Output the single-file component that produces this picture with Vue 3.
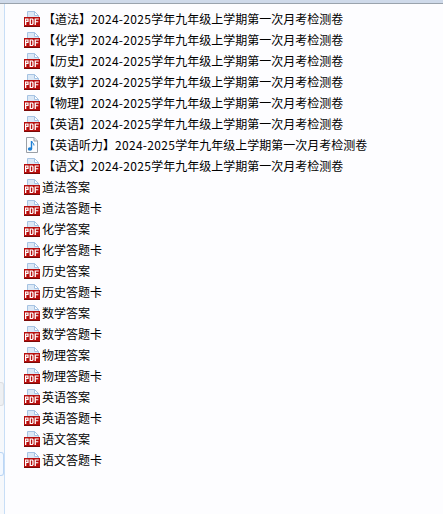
<script setup>
const title = '学年九年级上学期第一次月考检测卷'
const years = '2024-2025'

const papers = ['道法', '化学', '历史', '数学', '物理', '英语'].map((s) => ({
  name: `【${s}】`,
  years,
  title,
  type: 'pdf'
}))
papers.push({ name: '【英语听力】', years, title, type: 'audio' })
papers.push({ name: '【语文】', years, title, type: 'pdf' })

const answers = []
for (const s of ['道法', '化学', '历史', '数学', '物理', '英语', '语文']) {
  answers.push({ name: `${s}答案`, type: 'pdf' })
  answers.push({ name: `${s}答题卡`, type: 'pdf' })
}

const files = [...papers, ...answers]
</script>

<template>
  <div class="window">
    <div class="topbar"></div>
    <div class="body">
      <div class="side">
        <div class="side-tab first"></div>
        <div class="side-tab second"></div>
      </div>
      <main class="pane">
        <ul class="list">
          <li v-for="f in files" :key="f.name" class="row" :class="{ wide: f.years }">
            <svg v-if="f.type === 'pdf'" class="icon" width="16" height="16" viewBox="0 0 16 16">
              <path d="M3.5 .5H10.5L14.5 4.5V15.5H3.5Z" fill="#dbe8f6" stroke="#a6c3e3" />
              <path d="M10.5 .5V4.5H14.5Z" fill="#fff" stroke="#a6c3e3" />
              <rect x="0" y="6" width="16" height="10" fill="#b80f0e" />
              <rect x="0" y="15" width="16" height="1" fill="#7a0a08" />
              <path d="M1 7.5h3.6v3.6H2.3V14H1ZM2.3 8.6v1.4h1V8.6Z" fill="#fff" fill-rule="evenodd" />
              <path d="M5.6 7.5h3l1 1v4.5l-1 1h-3ZM6.9 8.6v4.3h1l.4-.4V9l-.4-.4Z" fill="#fff" fill-rule="evenodd" />
              <path d="M10.6 7.5h4.2v1.1h-2.9v1.6h2.4v1.1h-2.4V14h-1.3Z" fill="#fff" />
            </svg>
            <svg v-else class="icon" width="16" height="16" viewBox="0 0 16 16">
              <path d="M2.5 .5H10L13.5 4V15.5H2.5Z" fill="#fbfcfe" stroke="#9a9fa6" />
              <path d="M10 .5V4H13.5" fill="#e6e9ee" stroke="#9a9fa6" />
              <path d="M7.5 4V12" stroke="#1d7fd4" stroke-width="1.4" fill="none" />
              <path d="M7.5 4C8 6 10 6 10 8.5" stroke="#1d7fd4" stroke-width="1" fill="none" />
              <ellipse cx="6" cy="12" rx="2.2" ry="1.8" fill="#1d7fd4" />
            </svg>
            <span class="name">{{ f.name }}<span v-if="f.years" class="years">{{ f.years }}</span>{{ f.title }}</span>
          </li>
        </ul>
      </main>
    </div>
  </div>
</template>

<style scoped>
.window {
  width: 443px;
  height: 514px;
  display: flex;
  flex-direction: column;
  background: #fdfdff;
  overflow: hidden;
  font-family: "Noto Sans CJK SC", "Liberation Sans", sans-serif;
}
.topbar {
  height: 3px;
  flex: none;
  background: #cfdaea;
  border-bottom: 1px solid #9aa3ad;
}
.body {
  flex: 1;
  display: flex;
  min-height: 0;
}
.side {
  width: 4px;
  flex: none;
  background: #f6f8fb;
  border-right: 1px solid #c8def6;
  display: flex;
  flex-direction: column;
}
.side-tab {
  height: 22px;
  flex: none;
  border: 1px solid #dcdfe3;
  border-left: none;
  border-radius: 0 3px 3px 0;
  background: #eef0f3;
}
.first {
  margin-top: 378px;
}
.second {
  margin-top: 46px;
  background: #f3f8ff;
  border-color: #bcd6f5;
}
.pane {
  flex: 1;
  min-width: 0;
}
.list {
  list-style: none;
  margin: 0;
  padding: 4px 0 0 19px;
}
.row {
  height: 21px;
  display: flex;
  align-items: center;
  font-size: 12px;
  color: #000;
  white-space: nowrap;
}
.icon {
  flex: none;
  margin-top: 1px;
}
.name {
  margin-left: 2px;
}
.row.wide .name {
  margin-left: 3px;
}
.years {
  letter-spacing: 0.3px;
}
</style>

<style>
html,
body {
  margin: 0;
  background: #fdfdff;
}
</style>
